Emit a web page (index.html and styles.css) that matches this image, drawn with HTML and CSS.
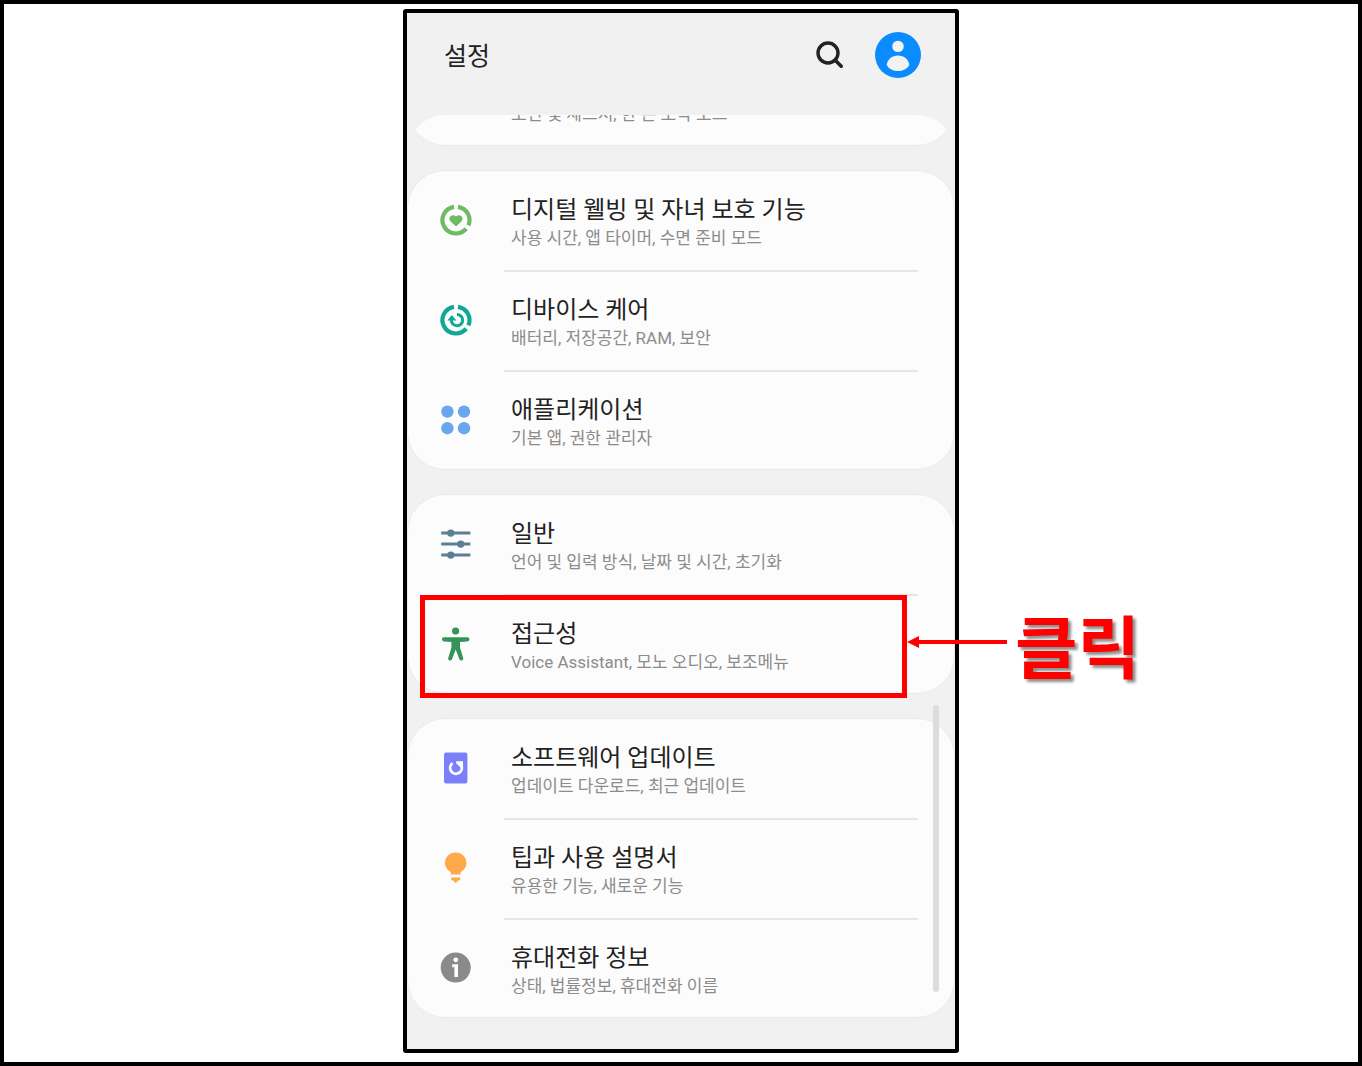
FILE: index.html
```html
<!DOCTYPE html>
<html lang="ko">
<head>
    <meta charset="UTF-8">
    <meta name="viewport" content="width=device-width, initial-scale=1.0">
    <title>설정</title>
    <link rel="stylesheet" href="styles.css">
</head>
<body>
    <main class="phone">
        <header class="header">
            <h1 class="header-title">설정</h1>
            <button class="icon-button" type="button" aria-label="검색">
                <svg width="28" height="28" viewBox="0 0 28 28" fill="none" stroke="#222" stroke-width="3.4">
                    <circle cx="12" cy="12" r="10"/>
                    <path d="M19 19l6.200 6.200" stroke-width="3.6" stroke-linecap="round"/>
                </svg>
            </button>
            <button class="icon-button" type="button" aria-label="계정">
                <svg width="46" height="46" viewBox="0 0 46 46">
                    <circle cx="23" cy="23" r="23" fill="#0a8cff"/>
                    <circle cx="23" cy="14.4" r="5.7" fill="#f2f2f2"/>
                    <path d="M11.6 33C12.6 27.4 17 23.6 23 23.6S33.4 27.4 34.4 33C32 37 28 39 23 39s-9-2-11.4-6z" fill="#f2f2f2"/>
                </svg>
            </button>
        </header>

        <div class="list">
            <div class="card card-cut">
                <a class="row" href="#">
                    <span class="row-body">
                        <span class="row-desc">모션 및 제스처, 한 손 조작 모드</span>
                    </span>
                </a>
            </div>

            <div class="card">
                <a class="row" href="#">
                    <svg class="row-icon" viewBox="0 0 32 32">
                        <g fill="none" stroke="#6dbb63" stroke-width="4.2">
                            <path d="M14 2.8A13.4 13.4 0 1 0 26.2 24.6"/>
                            <path d="M18 2.8A13.4 13.4 0 0 1 28.4 21.4"/>
                        </g>
                        <path d="M16 22.6l-5.4-5.2c-3.4-3.6 1.6-8.6 5.4-4.8 3.8-3.8 8.8 1.2 5.4 4.8z" fill="#6dbb63"/>
                    </svg>
                    <span class="row-body">
                        <span class="row-title">디지털 웰빙 및 자녀 보호 기능</span>
                        <span class="row-desc">사용 시간, 앱 타이머, 수면 준비 모드</span>
                    </span>
                </a>
                <a class="row" href="#">
                    <svg class="row-icon" viewBox="0 0 32 32">
                        <g fill="none" stroke="#0fa896" stroke-width="4.2">
                            <path d="M14 2.8A13.4 13.4 0 1 0 26.2 24.6"/>
                            <path d="M18 2.8A13.4 13.4 0 0 1 28.4 21.4"/>
                        </g>
                        <path d="M17 10.4A5.7 5.7 0 1 1 11.3 16" fill="none" stroke="#0fa896" stroke-width="3"/>
                        <path d="M7.4 16.4l4.4-5.4 4.6 5.4z" fill="#0fa896"/>
                    </svg>
                    <span class="row-body">
                        <span class="row-title">디바이스 케어</span>
                        <span class="row-desc">배터리, 저장공간, RAM, 보안</span>
                    </span>
                </a>
                <a class="row" href="#">
                    <svg class="row-icon" viewBox="0 0 32 32" fill="#69a6ee">
                        <circle cx="7.4" cy="7.6" r="6.2"/>
                        <circle cx="24" cy="7.6" r="6.2"/>
                        <circle cx="7.4" cy="24.2" r="6.2"/>
                        <circle cx="24" cy="24.2" r="6.2"/>
                    </svg>
                    <span class="row-body">
                        <span class="row-title">애플리케이션</span>
                        <span class="row-desc">기본 앱, 권한 관리자</span>
                    </span>
                </a>
            </div>

            <div class="card">
                <a class="row" href="#">
                    <svg class="row-icon" viewBox="0 0 32 32" fill="#5b7f96">
                        <path d="M1.2 3.6h29.2v3H1.2zM1.2 14.6h29.2v3H1.2zM1.2 25.6h29.2v3H1.2z"/>
                        <circle cx="10.8" cy="5.1" r="3.7"/>
                        <circle cx="20.8" cy="16.1" r="3.7"/>
                        <circle cx="10.8" cy="27.1" r="3.7"/>
                    </svg>
                    <span class="row-body">
                        <span class="row-title">일반</span>
                        <span class="row-desc">언어 및 입력 방식, 날짜 및 시간, 초기화</span>
                    </span>
                </a>
                <a class="row" href="#">
                    <svg class="row-icon" viewBox="0 0 32 32" fill="#369458">
                        <circle cx="15.6" cy="3" r="3.6"/>
                        <path d="M4 9.2h23.4a2 2 0 0 1 0 4.2L20 14v5.4l3.2 10.6c.6 2.6-2.8 3.6-3.8 1.2L15.7 21.4 12 31.2c-1 2.4-4.4 1.4-3.8-1.2l3.2-10.6V14L4 13.4a2 2 0 0 1 0-4.2z"/>
                    </svg>
                    <span class="row-body">
                        <span class="row-title">접근성</span>
                        <span class="row-desc">Voice Assistant, 모노 오디오, 보조메뉴</span>
                    </span>
                </a>
            </div>

            <div class="card">
                <a class="row" href="#">
                    <svg class="row-icon" viewBox="0 0 32 32">
                        <rect x="4" y="0.6" width="23.4" height="30.8" rx="2" fill="#7b80fa"/>
                        <path d="M12.6 11.2A5.8 5.8 0 1 0 21.3 13.6" fill="none" stroke="#fff" stroke-width="2.8"/>
                        <path d="M16.2 9.2h6.8v6.6l-2.4-.2-4.400-4.200z" fill="#fff"/>
                    </svg>
                    <span class="row-body">
                        <span class="row-title">소프트웨어 업데이트</span>
                        <span class="row-desc">업데이트 다운로드, 최근 업데이트</span>
                    </span>
                </a>
                <a class="row" href="#">
                    <svg class="row-icon" viewBox="0 0 32 32" fill="#ffa94a">
                        <path d="M15.7.6C9.6.6 5 5.200 5 11c0 4.4 2.6 7.2 5.8 9.2v2.4h9.8v-2.4c3.2-2 5.8-4.8 5.8-9.2C26.4 5.200 21.8.6 15.700.6z"/>
                        <path d="M11.2 25.400h9V28l-2.800 1-1 1.800H15L14 29l-2.800-1z"/>
                    </svg>
                    <span class="row-body">
                        <span class="row-title">팁과 사용 설명서</span>
                        <span class="row-desc">유용한 기능, 새로운 기능</span>
                    </span>
                </a>
                <a class="row" href="#">
                    <svg class="row-icon" viewBox="0 0 32 32">
                        <circle cx="15.7" cy="15.6" r="15" fill="#8a8a8a"/>
                        <circle cx="15.8" cy="7.8" r="2.4" fill="#fff"/>
                        <path d="M12.2 12.2H18V25h-3.6v-9.8h-2.2z" fill="#fff"/>
                    </svg>
                    <span class="row-body">
                        <span class="row-title">휴대전화 정보</span>
                        <span class="row-desc">상태, 법률정보, 휴대전화 이름</span>
                    </span>
                </a>
            </div>
        </div>

        <div class="scrollbar"></div>
        <div class="highlight"></div>
        <div class="callout">
            <svg class="callout-arrow" width="100" height="12" viewBox="0 0 100 12" fill="#f00">
                <path d="M0 6L12 0v4h88v4H12v4z"/>
            </svg>
            <strong class="callout-text">클릭</strong>
        </div>
    </main>
</body>
</html>
```
FILE: styles.css
```css
* {
    margin: 0;
    padding: 0;
    box-sizing: border-box;
}

body {
    display: flex;
    justify-content: center;
    align-items: flex-start;
    min-height: 100vh;
    padding: 5px 0 9px;
    border: 4px solid #000;
    background-color: #fff;
    font-family: Roboto, "Noto Sans CJK KR", sans-serif;
}

.phone {
    position: relative;
    width: 100%;
    max-width: 556px;
    border: 4px solid #000;
    border-radius: 3px;
    background-color: #f1f1f1;
}

/* Header */
.header {
    display: flex;
    align-items: center;
    gap: 31px;
    padding: 19px 34px 37px 37px;
}

.header-title {
    flex: 1;
    padding-top: 3px;
    font-size: 25px;
    line-height: 32px;
    font-weight: 400;
    color: #222;
}

.icon-button {
    display: flex;
    border: none;
    background: none;
    cursor: pointer;
}

/* Settings list */
.list {
    display: flex;
    flex-direction: column;
    gap: 24px;
    padding-bottom: 31px;
    border-radius: 38px 38px 0 0;
    overflow: hidden;
}

.card {
    border-radius: 38px;
    background-color: #fcfcfc;
    box-shadow: inset 0 0 0 1px #e8e8e8;
}

.row {
    display: flex;
    gap: 32px;
    padding: 0 37px 0 33px;
    color: inherit;
    text-decoration: none;
}

.row-icon {
    flex: none;
    width: 32px;
    height: 32px;
    margin-top: 34px;
    overflow: visible;
}

.row-body {
    flex: 1;
    display: flex;
    flex-direction: column;
    padding: 22px 0 20px 7px;
    border-top: 2px solid #e6e6e6;
}

.row:first-child .row-body {
    border-top-color: transparent;
}

.row-title {
    font-size: 24px;
    line-height: 32px;
    color: #222;
}

.row-desc {
    font-size: 17px;
    line-height: 24px;
    color: #8c8c8c;
}

/* Card scrolled under the header */
.card-cut {
    margin-top: -15px;
    border-radius: 0 0 38px 38px;
}

.card-cut .row {
    padding-left: 97px;
}

.card-cut .row-body {
    padding-top: 0;
}

.scrollbar {
    position: absolute;
    top: 692px;
    right: 16px;
    width: 6px;
    height: 287px;
    border-radius: 3px;
    background-color: #dcdcdc;
}

/* Red marker and arrow */
.highlight {
    position: absolute;
    top: 582px;
    left: 13px;
    right: 48px;
    height: 103px;
    border: 5px solid #f00;
}

.callout {
    position: absolute;
    top: 601px;
    left: 500px;
    display: flex;
    align-items: flex-start;
    gap: 8px;
}

.callout-arrow {
    margin-top: 22px;
}

.callout-text {
    font-size: 68px;
    line-height: 72px;
    font-weight: 700;
    color: #f00;
    white-space: nowrap;
    text-shadow: 3px 3px 3px rgba(0, 0, 0, 0.45);
}
```
